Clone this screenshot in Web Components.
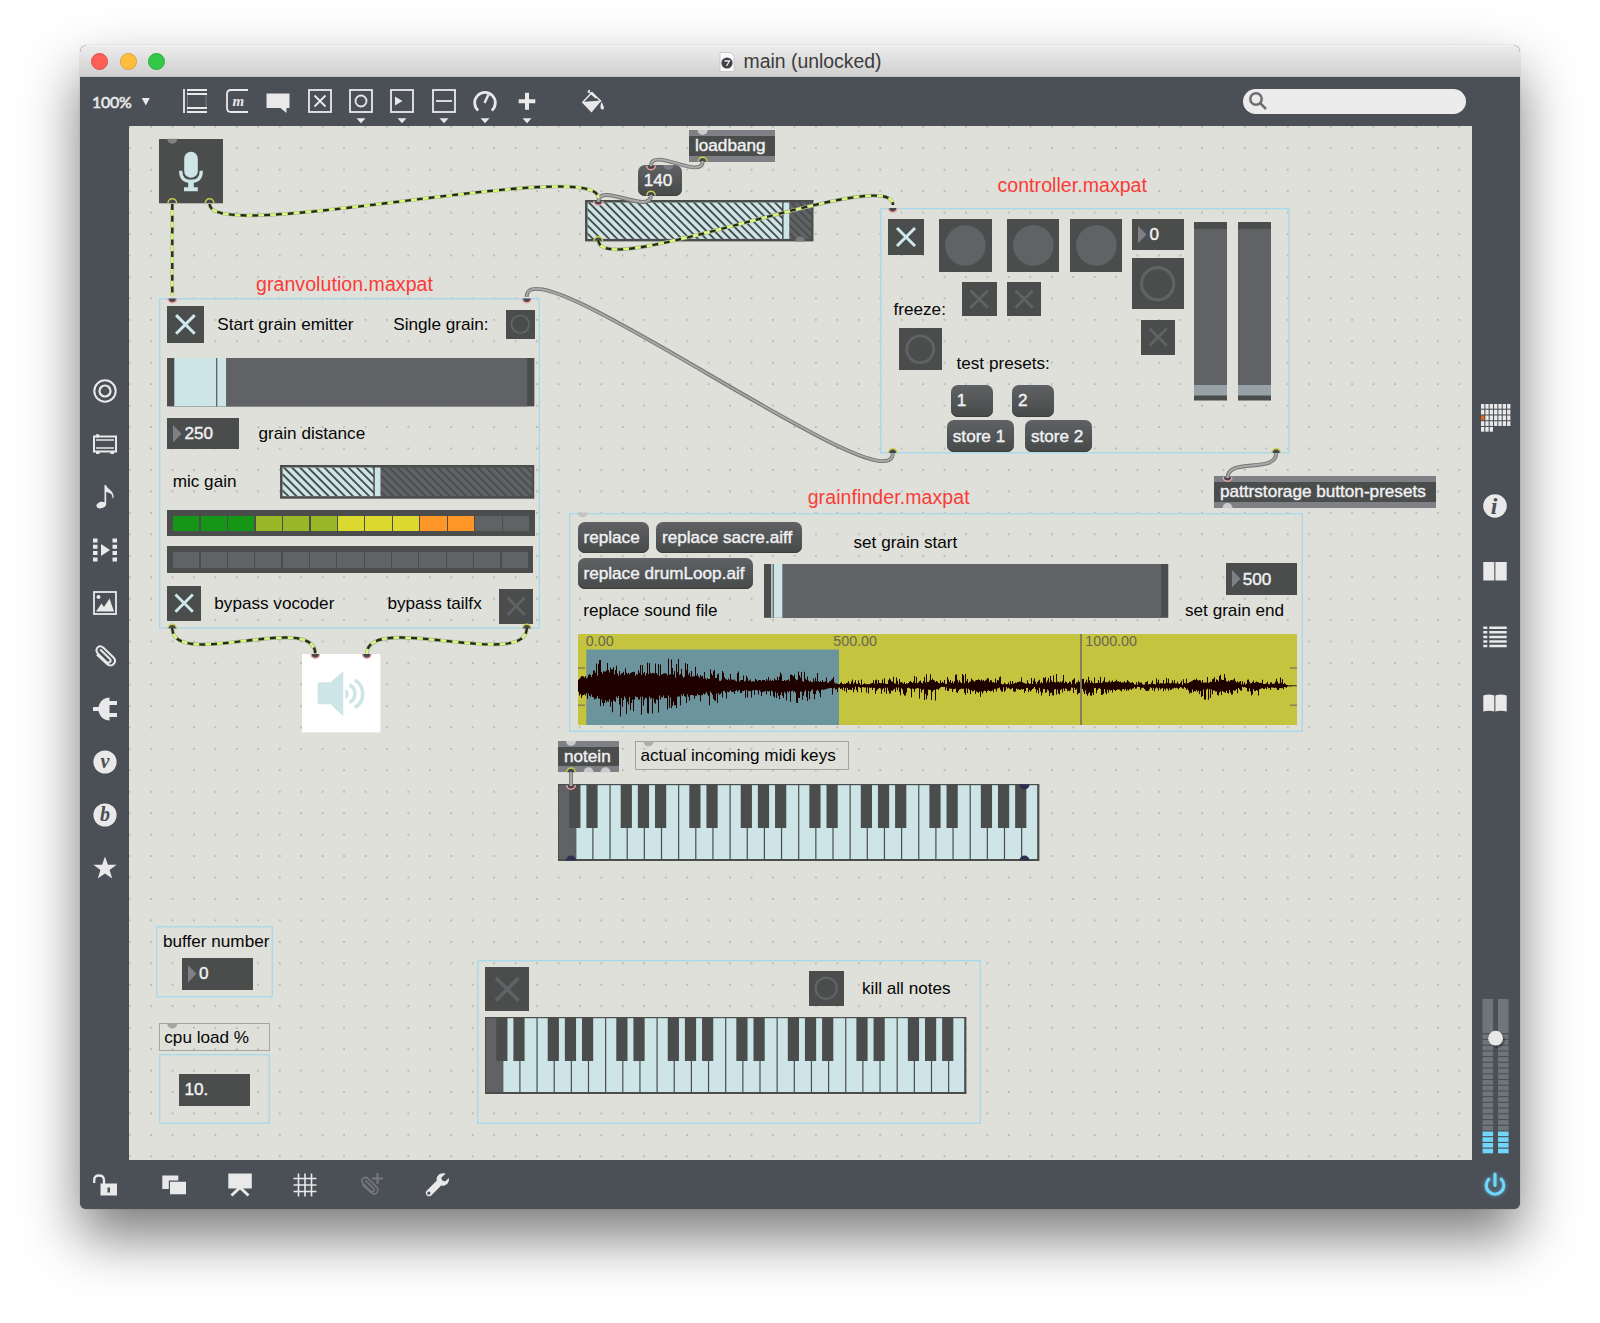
<!DOCTYPE html>
<html lang="en">
<head>
<meta charset="utf-8">
<title>main (unlocked)</title>
<style>
  html, body { margin: 0; background: #fff; overflow: hidden; }
  body { width: 1600px; height: 1323px; font-family: "Liberation Sans", Arial, sans-serif; }
</style>
</head>
<body>
<max-window>
  <window-title slot="title">main (unlocked)</window-title>
  <tool-bar slot="tools" zoom="100%"></tool-bar>
  <side-rail slot="left"></side-rail>
  <patch-canvas slot="patch">
    <max-mic x="159" y="138.7" w="64" h="64.300"></max-mic>
    <max-object x="689" y="130.4" w="86" h="31.400">loadbang</max-object>
    <max-message x="638" y="164.5" w="44" h="31.5">140</max-message>
    <max-gain x="585" y="200.400" w="228.5" h="41.400" value="783"></max-gain>

    <max-comment red x="256" y="290.7" fit="177">granvolution.maxpat</max-comment>
    <max-comment red x="997.5" y="192.5" fit="149.5">controller.maxpat</max-comment>
    <max-comment red x="807.7" y="504.3" fit="162">grainfinder.maxpat</max-comment>

    <max-frame x="880" y="207.5" w="409.5" h="245.5"></max-frame>
    <max-toggle on x="888" y="219" s="36" r="9"></max-toggle>
    <max-button lit x="939.3" y="219" s="52.8" r="20.3"></max-button>
    <max-button lit x="1006.7" y="219" s="52.8" r="20.3"></max-button>
    <max-button lit x="1069.7" y="219" s="52.8" r="20.3"></max-button>
    <max-number x="1132.4" y="219" w="51.4" h="31">0</max-number>
    <max-toggle x="962.3" y="282" s="34.3" r="8.7"></max-toggle>
    <max-toggle x="1006.7" y="282" s="34.3" r="8.7"></max-toggle>
    <max-button x="1132.4" y="257.5" s="51.4" r="16.1" t="3.3"></max-button>
    <max-toggle x="1141" y="320.4" s="34.3" r="8.7"></max-toggle>
    <max-comment x="893.5" y="315.7">freeze:</max-comment>
    <max-button x="899.3" y="327.7" s="42.5" r="13.4" t="2.8"></max-button>
    <max-comment x="956.5" y="369">test presets:</max-comment>
    <max-message x="951" y="384.5" w="42" h="32">1</max-message>
    <max-message x="1012.3" y="384.5" w="42" h="32">2</max-message>
    <max-message x="947" y="420.3" w="67" h="32">store 1</max-message>
    <max-message x="1025.2" y="420.3" w="67" h="32">store 2</max-message>
    <max-vslider x="1194" y="221.7" w="33" h="178.5"></max-vslider>
    <max-vslider x="1238" y="221.7" w="33" h="178.5"></max-vslider>
    <max-object x="1214" y="476.4" w="221.5" h="31.5">pattrstorage button-presets</max-object>

    <max-frame x="159.2" y="298" w="381" h="330.7"></max-frame>
    <max-toggle on x="167.2" y="306.2" s="36.8" r="9.3"></max-toggle>
    <max-comment x="217.3" y="330">Start grain emitter</max-comment>
    <max-comment x="393.3" y="330">Single grain:</max-comment>
    <max-button x="506.3" y="310.3" s="28.5" r="8.9" t="1.9"></max-button>
    <max-slider x="167.2" y="357.6" w="367.4" h="48.4" line="216.2" to="226.2"></max-slider>
    <max-number x="167.2" y="417.7" w="71.4" h="31.5">250</max-number>
    <max-comment x="258.5" y="439">grain distance</max-comment>
    <max-comment x="172.7" y="487.7">mic gain</max-comment>
    <max-gain x="280.300" y="465.3" w="254.3" h="33.7" value="374.5"></max-gain>
    <max-meter x="167.2" y="510.4" w="367.5" h="25.6" lit="11"></max-meter>
    <max-meter x="167.2" y="546.4" w="366.2" h="27" lit="0"></max-meter>
    <max-toggle on x="167.2" y="586.3" s="34.3" r="8.7"></max-toggle>
    <max-comment x="214.3" y="609.4">bypass vocoder</max-comment>
    <max-comment x="387.4" y="609.4">bypass tailfx</max-comment>
    <max-toggle x="499" y="589.2" s="34.4" r="8.7"></max-toggle>
    <max-speaker x="301.8" y="653.6" w="78.4" h="78.4"></max-speaker>

    <max-frame x="569.4" y="512.5" w="734" h="219"></max-frame>
    <max-message x="577.7" y="522" w="71" h="31.3">replace</max-message>
    <max-message x="656.2" y="522" w="146" h="31.3">replace sacre.aiff</max-message>
    <max-message x="577.7" y="558" w="175.4" h="31.3">replace drumLoop.aif</max-message>
    <max-comment x="853.5" y="548.3">set grain start</max-comment>
    <max-comment x="583.2" y="616.7">replace sound file</max-comment>
    <max-slider x="763.7" y="563.9" w="404.3" h="53.8" line="772.3" to="782"></max-slider>
    <max-number x="1225.5" y="563.3" w="71.4" h="31.5">500</max-number>
    <max-comment x="1185" y="616.7">set grain end</max-comment>
    <max-waveform x="578" y="634" w="719" h="91"></max-waveform>

    <max-object x="558" y="741.2" w="61" h="31.3">notein</max-object>
    <max-comment boxed x="640.5" y="761.7" bx="635" by="741" w="214" h="28.5">actual incoming midi keys</max-comment>
    <max-keyboard x="558" y="784" w="481.4" h="77"></max-keyboard>

    <max-frame x="156" y="925.6" w="117" h="71.4"></max-frame>
    <max-comment x="163" y="947.4">buffer number</max-comment>
    <max-number x="181.7" y="958" w="71.3" h="31.7">0</max-number>
    <max-comment boxed x="164.3" y="1043.3" bx="159" by="1022.8" w="111" h="28">cpu load %</max-comment>
    <max-frame x="159" y="1054.3" w="111" h="70"></max-frame>
    <max-number plain x="179" y="1074" w="71.2" h="31.7">10.</max-number>

    <max-frame x="476.6" y="960" w="504" h="164"></max-frame>
    <max-toggle x="484.5" y="966.7" s="44.5" r="11.2"></max-toggle>
    <max-button x="809.4" y="971.3" s="34.4" r="10.6" t="2.3"></max-button>
    <max-comment x="862" y="994.3">kill all notes</max-comment>
    <max-keyboard x="484.6" y="1017" w="481.4" h="77"></max-keyboard>
    <patch-cords></patch-cords>
  </patch-canvas>
  <info-rail slot="right"></info-rail>
  <status-bar slot="status"></status-bar>
</max-window>

<script>
const ORIGIN = { x: 129, y: 126 };
const DARK = '#4a4d4b', GREY = '#616266', PALE = '#cde5e7', INK = '#e9e9e9', RIM = '#4b4f56';

function define(name, html, setup) {
  customElements.define(name, class extends HTMLElement {
    connectedCallback() {
      if (this.shadowRoot) return;
      const root = this.attachShadow({ mode: 'open' });
      root.innerHTML = typeof html === 'function' ? html(this) : html;
      if (setup) setup(this, root);
    }
  });
}
const num = (el, k, d = 0) => el.hasAttribute(k) ? parseFloat(el.getAttribute(k)) : d;
const svg = (w, h, body, extra = '') => `<svg width="${w}" height="${h}" viewBox="0 0 ${w} ${h}" ${extra}>${body}</svg>`;

/* A box that sits on the free patch canvas; its body is an SVG or HTML of its own size. */
function place(x, y, w, h) {
  return `:host{position:absolute;display:block;left:${x - ORIGIN.x}px;top:${y - ORIGIN.y}px;width:${w}px;height:${h}px}svg{display:block;overflow:visible}`;
}
function definePatch(name, draw, css = '') {
  define(name, el => {
    const x = num(el, 'x'), y = num(el, 'y');
    const w = num(el, 'w', num(el, 's')), h = num(el, 'h', num(el, 's'));
    return `<style>${place(x, y, w, h)}${css}</style>${draw(el, { x, y, w, h })}`;
  });
}

/* ---------- window chrome ---------- */
define('max-window', `<style>
  :host{display:block;padding:45px 80px 0;box-sizing:border-box;width:1600px;height:1323px}
  .frame{width:1440px;height:1164px;display:flex;flex-direction:column;background:${RIM};border-radius:7px 7px 6px 6px;
    box-shadow:0 0 1px rgba(0,0,0,.45),0 28px 56px rgba(0,0,0,.52)}
  .mid{display:flex;height:1034px}
</style>
<div class="frame"><slot name="title"></slot><slot name="tools"></slot>
<div class="mid"><slot name="left"></slot><slot name="patch"></slot><slot name="right"></slot></div>
<slot name="status"></slot></div>`);

define('window-title', `<style>
  :host{display:flex;height:32px;align-items:center;box-sizing:border-box;padding:1.500px 11.300px 0;border-radius:7px 7px 0 0;
    background:linear-gradient(#f6f6f6 0,#ebebeb 2px,#d0d0d0 31px,#b4b4b4 32px)}
  .lights{display:flex;gap:11.6px;width:100px}
  i{width:17px;height:17px;border-radius:50%;box-sizing:border-box;border:1px solid #e04b46;background:#ff5f57}
  i:nth-child(2){background:#ffbd3e;border-color:#dfa035} i:nth-child(3){background:#33c948;border-color:#29ac3b}
  .name{flex:1;display:flex;justify-content:center;align-items:center;gap:9px;margin-right:100px;font-size:19.4px;color:#3c3c3c}
  svg{display:block}
</style><div class="lights"><i></i><i></i><i></i></div>
<div class="name">${svg(16, 20, '<path d="M1 .5h10.500l3.500 3.500v15.500h-14z" fill="#fafafa" stroke="#c4c4c4" stroke-width=".8"/><circle cx="8" cy="11" r="5.600" fill="#3f4246"/><path d="M5.500 9h5l-3 5" fill="none" stroke="#eee" stroke-width="1.300"/>')}<slot></slot></div>`);

const ic = body => svg(24, 24, body, `fill="none" stroke="${INK}" stroke-width="1.800"`);
const box = '<rect x="1" y="1" width="22" height="22"/>';
const F = `fill="${INK}" stroke="none"`;
const clipPath = 'M7.200 5.600l9.800 9.300c2.100 2.200-1.100 5.200-3.300 3.200L5.300 10C.9 5.500 5.700-.6 10.400 3.700l9.900 9.600c4.500 4.800-1.500 11-6.300 6.700L3.800 10.500';

define('tool-bar', el => {
  const items = [
    [`<path d="M1 0v24M4 1h20M4 5h20M4 19h20M4 23h20"/><path d="M4.500 1v22M23 5v14" stroke-width=".7" opacity=".45"/>`],
    [`<path d="M23 1H6Q2 1 2 5v14q0 4 4 4h17"/><text x="7.500" y="16.500" ${F} font-family="Liberation Serif, serif" font-style="italic" font-weight="bold" font-size="15">m</text>`],
    [`<path ${F} d="M.5 4.500h23v14.500h-3v5l-6-5h-14z"/>`],
    [box + '<path d="M6.500 6.500l11 11m0-11l-11 11"/>'],
    [box + '<circle cx="12" cy="12" r="5.500"/>', 1],
    [box + `<path ${F} d="M5 7.500l7.500 4.500-7.500 4.500z"/>`, 1],
    [box + '<path d="M4 12h16"/>', 1],
    ['<path stroke-width="2.800" d="M5.200 21.500A10.300 10.300 0 1 1 18.800 21.500"/><path stroke-width="2.500" d="M11.500 14l4-8.500"/>', 1],
    ['<path stroke-width="4" d="M12 3.700v17M3.700 12.200h16.600"/>', 1],
  ].map(([b, t]) => `<div class="i">${ic(b)}${t ? svg(10, 6, `<path d="M.5.3h9l-4.500 5z" fill="${INK}"/>`, 'class="t"') : ''}</div>`).join('');
  return `<style>
  :host{display:flex;height:49px;align-items:center;padding:0 54px 1px 12px;box-sizing:border-box;color:${INK}}
  svg{display:block}
  .z{font:15.900px Lato,sans-serif;-webkit-text-stroke:.6px ${INK};width:49px;letter-spacing:-.2px}
  .icons{display:flex;gap:17.450px;margin-left:32.200px}
  .i{position:relative;width:24px;height:24px}
  .t{position:absolute;left:7px;top:28.500px}
  .fill{margin-left:42px}
  .search{margin-left:auto;width:223.500px;height:25px;border-radius:13px;background:#ececec;display:flex;align-items:center;padding-left:5px;box-sizing:border-box}
</style><span class="z">${el.getAttribute('zoom')}</span>${svg(10, 9, `<path d="M.8 1h8l-4 7.500z" fill="${INK}"/>`)}
<div class="icons">${items}</div>
<div class="fill">${ic(`<path stroke-width="1.500" d="M2 13L11 3.500 20 12.500M7 2l8 7M8.500 1l-1.500 2.500"/><path ${F} d="M.5 13l20-1.500-10 12zM20.500 13c2.500 4.500 3.500 7.500 1 7.500s-2.500-3-1-7.500z"/>`)}</div>
<div class="search">${svg(20, 20, '<g fill="none" stroke="#6b6d70" stroke-width="2.500"><circle cx="8" cy="8" r="5.700"/><path d="M12.200 12.200l5.800 5.800"/></g>')}</div>`;
});

define('side-rail', () => {
  const letter = (c, x) => `<circle cx="12" cy="12" r="11.600" ${F}/><text x="${x}" y="18" fill="${RIM}" stroke="none" font-family="Liberation Serif, serif" font-style="italic" font-weight="bold" font-size="20">${c}</text>`;
  const sq = [0, 6.3, 12.6, 19].map(y => `<path ${F} d="M0 ${y + .5}h4.500v4h-4.500zM19.500 ${y + .5}h4.500v4h-4.500z"/>`).join('');
  const items = [
    '<circle cx="12" cy="12" r="10.700" stroke-width="2"/><circle cx="12" cy="12" r="5.500" stroke-width="2.200"/>',
    `<path d="M1 4.500h22v15H1z" stroke-width="2"/><path d="M3 8h18M3 16h18" stroke-width="1.600"/><circle cx="4.500" cy="3.800" r="1.900" ${F}/><path ${F} d="M3 20h3.500v2H3zM17.500 20h3.500v2h-3.500z"/>`,
    `<path ${F} d="M11.500 0h1.600c.3 4 8.800 5.500 7.300 13l-1 .2c.4-3.700-2-5.500-6.200-6.200v12.300c-.5 4-8.500 6-9.700 2-.5-3 4.500-5.800 8-4z"/>`,
    sq + `<path ${F} d="M8 6l9 6-9 6z"/>`,
    box + `<circle cx="5.500" cy="6" r="2" ${F}/><path ${F} d="M3 20.500l5.500-8 2.500 3.500 5.500-8.500 4.500 13z"/>`,
    `<path stroke-width="2" d="${clipPath}"/>`,
    `<path ${F} d="M0 10h5.500C7 4 11 .5 16.500.5v3.500h7.500v4h-7.500v8h7.500v4h-7.500v3.500C11 23.500 7 20 5.500 14H0z"/>`,
    letter('v', 7.500), letter('b', 7),
    `<path ${F} d="M12 .5l2.900 8.200 8.700.1-7 5.300 2.600 8.500-7.200-5-7.200 5 2.600-8.500-7-5.300 8.700-.1z"/>`
  ];
  return `<style>:host{display:flex;flex-direction:column;width:49px;box-sizing:border-box;padding:253.200px 0 0 12.600px;gap:29px;flex:none}svg{display:block;flex:none;overflow:visible}</style>${items.map(ic).join('')}`;
});

define('info-rail', () => {
  let g = '';
  for (let r = 0; r < 5; r++) for (let c = 0; c < (r === 4 ? 3 : 7); c++)
    g += `<rect x="${c * 4.350}" y="${r * 5.750}" width="3.300" height="4.700" fill="${r === 2 && c === 0 ? '#e0661f' : INK}"/>`;
  let list = '';
  for (let i = 0; i < 5; i++) list += `<path d="M.3 ${2.700 + i * 4.600}h4M6.300 ${2.700 + i * 4.600}h17.400" stroke-width="2.500"/>`;
  let v = '';
  for (const x of [.5, 16]) {
    v += `<rect x="${x}" y="0" width="10.600" height="34" fill="#70747b"/>`;
    for (let i = 0; i < 21; i++) v += `<rect x="${x}" y="${35.300 + i * 5.720}" width="10.600" height="4.600" fill="${i > 16 ? '#70d6fa' : '#70747b'}"/>`;
  }
  return `<style>:host{display:flex;flex-direction:column;align-items:center;width:48.500px;box-sizing:border-box;padding:278px 1.500px 6.500px 0;flex:none}
  svg{display:block;flex:none;overflow:visible}.n{display:flex;flex-direction:column;gap:41.700px;margin-top:61.700px}.v{margin-top:auto}</style>
  ${svg(29, 28, g)}
  <div class="n">${ic(`<circle cx="12" cy="12" r="11.800" ${F}/><text x="7.800" y="20" fill="${RIM}" stroke="none" font-family="Liberation Serif, serif" font-style="italic" font-weight="bold" font-size="24">i</text>`)}
  ${ic(`<path ${F} d="M.3 2.900h11v18.600h-11zM12.400 2.900h11.300v18.600h-11.300z"/>`)}${ic(list)}
  ${ic(`<path ${F} d="M.3 4.500q6-2 11 0v16q-5-1.500-11 0zM12.400 4.500q5-2 11.300 0v16q-6-1.500-11.300 0z"/>`)}</div>
  <div class="v">${svg(27, 155, v + '<circle cx="15.500" cy="41.500" r="7.500" fill="#000" opacity=".25"/><circle cx="13.600" cy="39.200" r="7.400" fill="#e8e8e8"/>')}</div>`;
});

define('status-bar', `<style>:host{display:flex;align-items:center;height:49px;padding:0 12.600px 0 12.500px}
  svg{display:block;overflow:visible}.g{display:flex;gap:41.800px;margin-left:45.300px}.p{margin-left:auto;filter:drop-shadow(0 0 2px rgba(100,210,255,.6))}</style>
  ${ic(`<path stroke-width="2.300" d="M1.200 10V7Q1.200 2.500 6 2.500t5 4.500v4"/><path ${F} fill-rule="evenodd" d="M7.500 10.500h16.500v12H7.500zM14.500 14.500v5h2.500v-5z"/>`)}
  <div class="g">
  ${ic(`<path ${F} d="M.3 2.500h16v5h-9.500v8.500h-6.500zM8 8.800h16v12.500H8z"/>`)}
  ${ic(`<path ${F} d="M.3.5h23.500v15h-23.500z"/><path stroke-width="3" d="M12 14.500L3.500 22.500M12 14.500l8.500 8"/>`)}
  ${ic('<path stroke-width="1.600" d="M5.500.5v23M12 .5v23M18.500.5v23M.5 5.500h23M.5 12h23M.5 18.500h23"/>')}
  ${svg(24, 24, `<g fill="none" stroke="#74777c"><path stroke-width="1.900" transform="translate(0 2.500) scale(.86)" d="${clipPath}"/><path stroke-width="2.200" d="M18.500 0v11M13 5.500h11"/></g>`)}
  ${ic(`<path ${F} fill-rule="evenodd" d="M20.500.8l-4.300 4 1 2.800 3 1 3.700-3.500c.8 5-3.200 8.500-7.700 7.300L6.300 22.600c-3 2.200-7-1.500-4.900-4.700L11.800 7.500C10.700 3 15.500-1 20.500.8zM3.800 18.500a1.600 1.600 0 1 0 .1 3.200 1.600 1.600 0 1 0-.1-3.200z"/>`)}
  </div>
  ${svg(24, 24, '<g fill="none" stroke="#70d6fa" stroke-width="3.200" stroke-linecap="round"><path d="M5.800 6.200A8.800 8.800 0 1 0 18.200 6.200"/><path d="M12 1v11.500"/></g>', 'class="p"')}`);

/* ---------- patch canvas ---------- */
define('patch-canvas', `<style>:host{position:relative;display:block;width:1342.500px;height:1034px;flex:none;overflow:hidden;background:#dfe0da}
  .g{position:absolute;left:0;top:0}</style>
  <svg class="g" width="1343" height="1034"><defs><pattern id="d" width="21.447" height="21.450" patternUnits="userSpaceOnUse" x="-.4" y="-.2"><circle cx="1" cy="1" r=".98" fill="#aeb0aa"/></pattern></defs><rect width="1343" height="1034" fill="url(#d)"/></svg><slot></slot>`);

const textCss = `span{position:absolute;white-space:nowrap;line-height:20px;font-size:17.150px}.w{color:#f1f1f4;-webkit-text-stroke:.4px #f1f1f4}`;
const label = (x, base) => `<span class="w" style="left:${x}px;top:${base - 15.700}px"><slot></slot></span>`;

definePatch('max-frame', (el, { w, h }) => svg(w, h, `<rect x=".7" y=".7" width="${w - 1.4}" height="${h - 1.4}" fill="none" stroke="#a9d9ea" stroke-width="1.400"/>`));

define('max-comment', el => {
  const red = el.hasAttribute('red'), size = red ? 19.5 : 17.15;
  const up = red ? 18.2 : 16.3;
  const x = num(el, 'x'), y = num(el, 'y'), boxed = el.hasAttribute('boxed');
  const bx = num(el, 'bx', x), by = num(el, 'by', y - up);
  let ls = 0;
  if (el.hasAttribute('fit')) {
    const c = document.createElement('canvas').getContext('2d');
    c.font = size + 'px "Liberation Sans"';
    const t = el.textContent.trim();
    ls = (num(el, 'fit') - c.measureText(t).width) / t.length;
  }
  return `<style>:host{position:absolute;display:block;left:${bx - ORIGIN.x}px;top:${by - ORIGIN.y}px;${boxed ? `width:${num(el, 'w')}px;height:${num(el, 'h')}px;box-sizing:border-box;border:1px solid #a3a4a0;` : ''}}
  span{position:relative;display:block;white-space:nowrap;line-height:${red ? 22 : 20}px;font-size:${size}px;letter-spacing:${ls}px;color:${red ? '#fb3a36' : '#050505'};${boxed ? `padding:${y - up - by - 1}px 0 0 ${x - bx - 1}px` : ''}}</style><span><slot></slot></span>`;
});

definePatch('max-object', () => label(6, 20.8),
  `:host{background:linear-gradient(#7f8086 6px,${DARK} 6px,${DARK} calc(100% - 5.700px),#7f8086 calc(100% - 5.700px))}` + textCss);
definePatch('max-message', () => label(5.8, 21.1),
  `:host{border-radius:7px;background:linear-gradient(#5f6164,#474a49);box-shadow:inset 0 -1px 0 #3c3e3d}` + textCss);
definePatch('max-number', (el, b) => (el.hasAttribute('plain') ? '' : svg(15, b.h, `<path d="M6 ${b.h / 2 - 8.700}v17.400l8.500-8.700z" fill="#7f8086"/>`)) + label(el.hasAttribute('plain') ? 5.500 : 17.2, 21.1),
  `:host{background:${DARK}}` + textCss);

definePatch('max-toggle', (el, { w }) => {
  const r = num(el, 'r'), a = w / 2 - r, z = w / 2 + r;
  return svg(w, w, `<path d="M${a} ${a}L${z} ${z}M${z} ${a}L${a} ${z}" stroke="${el.hasAttribute('on') ? '#cfe9ec' : GREY}" stroke-width="${w * .082}"/>`);
}, `:host{background:${DARK}}`);
definePatch('max-button', (el, { w }) => svg(w, w, el.hasAttribute('lit')
  ? `<circle cx="${w / 2}" cy="${w / 2}" r="${num(el, 'r')}" fill="${GREY}"/>`
  : `<circle cx="${w / 2}" cy="${w / 2}" r="${num(el, 'r')}" fill="none" stroke="${GREY}" stroke-width="${num(el, 't')}"/>`), `:host{background:${DARK}}`);

definePatch('max-slider', (el, { x, w, h }) => {
  const line = num(el, 'line') - x, to = num(el, 'to') - x;
  return svg(w, h, `<rect width="${w}" height="${h}" fill="${DARK}"/><rect x="7.300" width="${w - 14.500}" height="${h}" fill="${GREY}"/>
  <rect x="7.300" width="${to - 7.300}" height="${h}" fill="${PALE}"/><rect x="${line}" width="1.300" height="${h}" fill="${GREY}"/>`);
});
definePatch('max-vslider', (el, { w, h }) => svg(w, h, `<rect width="${w}" height="${h}" fill="${DARK}"/><rect y="7" width="${w}" height="${h - 12.5}" fill="${GREY}"/><rect y="163" width="${w}" height="10.500" fill="#96a2a5"/>`));

definePatch('max-gain', (el, { x, w, h }) => {
  const v = num(el, 'value') - x;
  return svg(w, h, `<defs><pattern id="s" width="5.720" height="5.720" patternUnits="userSpaceOnUse" patternTransform="rotate(-45)"><rect width="1.900" height="5.720" fill="${DARK}"/></pattern></defs>
  <rect width="${w}" height="${h}" fill="${DARK}"/><rect x="2.500" y="2.500" width="${w - 4.500}" height="${h - 5}" fill="${GREY}"/>
  <rect x="2.500" y="2.500" width="${v - 3}" height="${h - 5}" fill="${PALE}"/>
  <rect x="2.500" y="2.500" width="${w - 4.500}" height="${h - 5}" fill="url(#s)"/>
  <rect x="${v - .8}" y="2.500" width="7" height="${h - 5}" fill="${DARK}"/><rect x="${v + .6}" y="2.500" width="5.700" height="${h - 5}" fill="${PALE}"/>`);
});

definePatch('max-meter', el => {
  const lit = num(el, 'lit');
  const col = ['#169616', '#169616', '#169616', '#99b827', '#99b827', '#99b827', '#dbd92f', '#dbd92f', '#dbd92f', '#ff9728', '#ff9728'];
  return Array.from({ length: 13 }, (_, i) => `<i style="background:${i < lit ? col[i] : GREY}"></i>`).join('');
}, `:host{display:flex;gap:1.200px;padding:5.600px 5.700px 5px 6px;box-sizing:border-box;background:${DARK}}i{flex:1}`);

definePatch('max-keyboard', (el, { w, h }) => {
  const p = 17.15, o = .8;
  let s = `<rect width="${w}" height="${h}" fill="${DARK}"/>`;
  for (let i = 0; i < 28; i++) s += `<rect x="${i ? o + i * p + .4 : .8}" y="1.200" width="${i ? p - (i === 27 ? 2.200 : 1.200) : p}" height="${h - 3.200}" fill="${i ? PALE : GREY}"/>`;
  for (let i = 1; i < 28; i++) if ([1, 2, 4, 5, 6].includes(i % 7)) s += `<rect x="${o + i * p - 6.700}" y="0" width="11.200" height="44" fill="${DARK}"/>`;
  return svg(w, h, s);
});

definePatch('max-mic', (el, { w, h }) => svg(w, h, `<rect width="${w}" height="${h}" fill="${DARK}"/>
  <rect x="25.200" y="12.700" width="13.600" height="26" rx="6.800" fill="${PALE}"/>
  <path d="M21.700 31.700q0 10.700 10.300 10.700T42.300 31.700" fill="none" stroke="${PALE}" stroke-width="3.200"/>
  <path d="M29.200 41.700h5.600v6.500h4v4H25v-4h4.200z" fill="${PALE}"/>`));
definePatch('max-speaker', (el, { w, h }) => svg(w, h, `<rect width="${w}" height="${h}" fill="#fff"/>
  <path d="M17.500 28.300h11L41.300 17v45.300L28.500 50.300h-11q-2-.2-2-2.500v-17q0-2.300 2-2.500z" fill="${PALE}"/>
  <path d="M43.300 35.300a5 5 0 0 1 0 9.500z" fill="${PALE}"/>
  <path d="M46.500 31.200a9.700 9.700 0 0 1 0 17.600M52 26.300a16 16 0 0 1 0 27.600" fill="none" stroke="${PALE}" stroke-width="3.600" transform="translate(.8 -.3)"/>`));

/* Amplitude envelopes: [x, core, peak up, peak down] in pixels. */
const ENV = [[0, 8, 11, 12], [8, 9, 14, 13], [16, 12, 31, 14], [26, 14, 23, 26], [34, 14, 26, 34], [44, 13, 25, 34], [55, 12, 18, 28], [70, 13, 25, 33], [84, 12, 28, 24], [95, 10, 29, 28], [108, 10, 26, 19], [125, 8, 16, 15], [134, 7, 20, 25], [150, 6, 12, 12], [162, 5, 16, 12], [180, 5, 11, 12], [205, 6, 14, 14], [218, 6, 16, 18], [240, 4, 13, 13], [252, 3, 13, 10], [262, 1.5, 5, 5], [268, 2.5, 9, 7], [278, 1, 6, 7], [300, 2.5, 9, 9], [322, 2, 10, 10], [340, 3, 10, 14], [356, 4, 14, 16], [365, 1, 6, 6], [372, 3, 13, 9], [388, 3, 12, 10], [400, 6, 8, 12], [412, 5, 8, 10], [420, 2, 12, 8], [430, 1, 5, 5], [441, 4, 9, 7], [455, 1.5, 8, 8], [464, 3, 9, 11], [482, 4, 14, 10], [492, 2, 9, 13], [503, 3, 9, 9], [519, 2.5, 10, 12], [532, 4, 8, 7], [550, 4, 6, 6], [558, 1, 4, 4], [570, 1.5, 7, 6], [582, 2, 8, 5], [594, 3, 9, 7], [604, 1, 7, 5], [619, 6, 10, 11], [626, 3, 9, 15], [642, 6, 14, 11], [655, 5, 10, 11], [664, 1, 5, 6], [677, 4, 10, 12], [688, 1.5, 5, 4], [702, 2.5, 9, 6], [708, .8, 2, 2], [713, .3, .6, .6], [720, .3, .6, .6]];
definePatch('max-waveform', (el, { w, h }) => {
  let seed = 77; const rnd = () => (seed = (seed * 16807) % 2147483647) / 2147483647;
  let d = '';
  for (let x = 0, k = 0; x < w - 1; x += 1) {
    while (k < ENV.length - 2 && ENV[k + 1][0] <= x) k++;
    const a = ENV[k], b = ENV[k + 1], f = (x - a[0]) / (b[0] - a[0]);
    const m = i => a[i] + (b[i] - a[i]) * f;
    const core = m(1) * (.75 + .4 * rnd());
    const u = Math.max(core, m(2) * Math.pow(rnd(), 1.4)), v = Math.max(core, m(3) * Math.pow(rnd(), 1.4));
    d += `M${x + .5} ${(51.8 - u).toFixed(1)}V${(51.8 + v).toFixed(1)}`;
  }
  return svg(w, h, `<rect width="${w}" height="${h}" fill="#c4c43e"/><rect x="8.300" y="15.500" width="252.700" height="${h - 15.500}" fill="#6c949c"/>
  <path d="${d}" stroke="#1f0200" stroke-width="1.050"/>
  <path d="M503 0V${h}" stroke="#7c7c58" stroke-width="1.800"/>
  <path d="M0 34h7M0 71.300h7M712 34h7M712 71.300h7" stroke="#84845a" stroke-width="1.500"/><path d="M713 51.800h6" stroke="#4a4a20"/>
  <g fill="#67675a" font-family="Liberation Sans, sans-serif" font-size="14.300"><text x="7.800" y="12.200">0.00</text><text x="255.300" y="12.200">500.00</text><text x="507.300" y="12.200">1000.00</text></g>`);
});

/* ---------- cords and ports ---------- */
define('patch-cords', () => {
  const C = (x1, y1, x2, y2, d) => `M${x1} ${y1}C${x1} ${y1 + d} ${x2} ${y2 - d} ${x2} ${y2}`;
  const sig = ['M172.300 204V296', C(209.6, 204, 598.3, 198, 42), C(598.3, 240, 893, 205, 43), C(172.3, 628, 315.3, 654, 43), C(526.8, 628, 366.8, 654, 43)];
  const ctl = [C(702.7, 161, 651, 166, 20), C(651, 195, 598.3, 202, 21), C(892.8, 453, 526.7, 297, 58), C(1276.2, 453, 1227.5, 478, 21), 'M571 772V786'];
  const inlet = (x, y, c = '#f3a29b', f = '#454853') => `<path d="M${x - 4.300} ${y}a4.300 4.300 0 0 0 8.600 0" fill="${f}" stroke="${c}" stroke-width="1.500"/>`;
  const outlet = (x, y, f = '#454853') => `<path d="M${x - 4.300} ${y}a4.300 4.300 0 0 1 8.600 0" fill="${f}" stroke="#cccd4c" stroke-width="1.500"/>`;
  const idle = (x, y, up, c) => `<path d="M${x - 5} ${y}a5 5 0 0 ${up ? 1 : 0} 10 0z" fill="${c}"/>`;
  return `<style>:host{position:absolute;left:0;top:0;display:block;width:1343px;height:1034px}svg{display:block}</style>
  <svg width="1343" height="1034" viewBox="${ORIGIN.x} ${ORIGIN.y} 1343 1034" fill="none">
  ${inlet(598.3, 201)}${inlet(651, 165.500)}${inlet(892.800, 208)}${inlet(172.300, 298.500)}${inlet(526.800, 298.500)}${inlet(315.300, 654)}${inlet(366.800, 654)}${inlet(1227.500, 477)}${inlet(571, 785)}
  ${outlet(172.300, 203)}${outlet(209.600, 203)}${outlet(598.3, 241)}${outlet(702.700, 161.500)}${outlet(651, 195.500)}${outlet(892.800, 453)}${outlet(1276.200, 453)}${outlet(172.300, 628.500)}${outlet(526.800, 628.500)}${outlet(571, 772.300)}
  ${idle(172.3, 138.700, 0, '#808382')}${idle(702.700, 130, 0, '#c9cacb')}${idle(668.500, 165, 0, '#7b7d80')}${idle(800, 241.500, 1, '#7b7d80')}${idle(1227.500, 508, 1, '#c9cacb')}${idle(582.500, 512.500, 0, '#c4c5c1')}${idle(571, 741, 0, '#c9cacb')}${idle(588.500, 772.300, 1, '#c9cacb')}${idle(605.500, 772.300, 1, '#c9cacb')}${idle(648.500, 741.500, 0, '#aeafab')}${idle(172.300, 1023.500, 0, '#a4a5a1')}
  ${idle(571, 860.500, 1, '#2f3050')}${idle(1024.500, 784.500, 0, '#2a2b50')}${idle(1024.500, 860.500, 1, '#2f3050')}
  ${ctl.map(d => `<path d="${d}" stroke="#747474" stroke-width="3.900"/><path d="${d}" stroke="#a9a9a9" stroke-width="2"/>`).join('')}
  ${sig.map(d => `<path d="${d}" stroke="#a9ad97" stroke-width="3.600"/><path d="${d}" stroke="#d9fb7c" stroke-width="2.400"/><path d="${d}" stroke="#252b1c" stroke-width="2.400" stroke-dasharray="5.900 5.900"/>`).join('')}
  </svg>`;
});
</script>
</body>
</html>
